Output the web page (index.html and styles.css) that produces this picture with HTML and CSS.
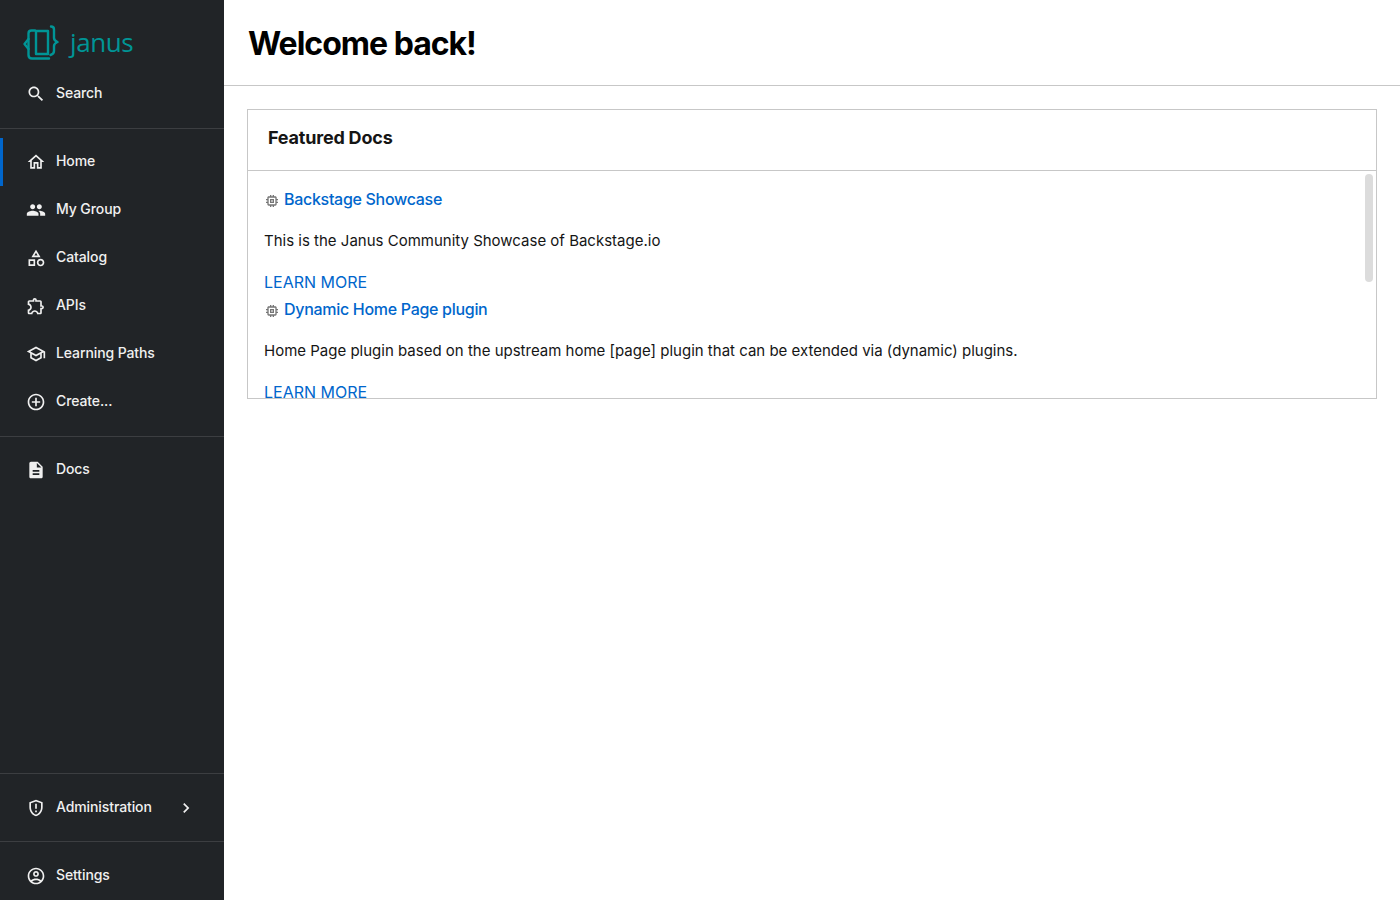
FILE: index.html
```html
<!DOCTYPE html>
<html lang="en">
<head>
<meta charset="utf-8">
<title>Welcome back!</title>
<link rel="stylesheet" href="styles.css">
</head>
<body>
<div class="app">
  <nav class="sidebar">
    <a class="logo" href="#">
      <svg class="logo-mark" width="36" height="36" viewBox="0 0 36 36" fill="none" stroke="currentColor" stroke-width="2.4" stroke-linecap="round" stroke-linejoin="round">
        <path d="M12 5.500H8.500Q5.500 5.500 5.500 8.500V30Q5.500 33.500 9 33.500H26"/>
        <path d="M13 6H25V29H13Z"/>
        <path d="M28 1.500Q31 1.500 31 4.500V13Q31 15.500 34.500 17Q31 18.500 31 21V26Q31 29 27.500 30"/>
        <path d="M5.500 14L1.500 19L5.500 24"/>
      </svg>
      <span class="logo-text">janus</span>
    </a>
    <a class="nav-item" href="#">
      <svg class="icon" viewBox="0 0 24 24"><path d="M15.5 14h-.79l-.28-.27C15.41 12.59 16 11.11 16 9.5 16 5.91 13.09 3 9.5 3S3 5.91 3 9.5 5.91 16 9.5 16c1.61 0 3.09-.59 4.23-1.57l.27.28v.79l5 4.99L20.49 19l-4.99-5zm-6 0C7.01 14 5 11.99 5 9.5S7.01 5 9.5 5 14 7.01 14 9.5 11.99 14 9.5 14z"/></svg>
      <span>Search</span>
    </a>
    <hr class="divider search-divider">
    <div class="nav-group">
      <a class="nav-item active" href="#">
        <svg class="icon" viewBox="0 0 24 24"><path d="M12 5.690l5 4.500V18h-2v-6H9v6H7v-7.810l5-4.500M12 3L2 12h3v8h6v-6h2v6h6v-8h3L12 3z"/></svg>
        <span>Home</span>
      </a>
      <a class="nav-item" href="#">
        <svg class="icon" viewBox="0 0 24 24"><path d="M16 11c1.660 0 2.990-1.340 2.990-3S17.660 5 16 5c-1.660 0-3 1.340-3 3s1.340 3 3 3zm-8 0c1.660 0 2.990-1.340 2.990-3S9.660 5 8 5C6.340 5 5 6.340 5 8s1.340 3 3 3zm0 2c-2.330 0-7 1.170-7 3.500V19h14v-2.500c0-2.330-4.670-3.500-7-3.500zm8 0c-.29 0-.62.02-.97.05 1.160.84 1.970 1.970 1.970 3.450V19h6v-2.500c0-2.330-4.670-3.500-7-3.500z"/></svg>
        <span>My Group</span>
      </a>
      <a class="nav-item" href="#">
        <svg class="icon" viewBox="0 0 24 24"><path d="M12 2l-5.500 9h11L12 2zm0 3.840L13.930 9h-3.870L12 5.840zM17.500 13c-2.490 0-4.500 2.010-4.500 4.500s2.010 4.500 4.500 4.500 4.500-2.010 4.500-4.500-2.010-4.500-4.500-4.500zm0 7c-1.380 0-2.500-1.120-2.500-2.500s1.120-2.500 2.500-2.500 2.500 1.120 2.500 2.500-1.120 2.500-2.500 2.500zM3 21.500h8v-8H3v8zm2-6h4v4H5v-4z"/></svg>
        <span>Catalog</span>
      </a>
      <a class="nav-item" href="#">
        <svg class="icon" viewBox="0 0 24 24"><path d="M10.500 4.500c.28 0 .5.22.5.5v2h6v6h2c.28 0 .5.22.5.5s-.22.5-.5.5h-2v6h-2.120c-.68-1.750-2.390-3-4.380-3s-3.700 1.250-4.380 3H4v-2.120c1.750-.68 3-2.390 3-4.380 0-1.990-1.240-3.700-2.990-4.380L4 7h6V5c0-.28.22-.5.5-.5m0-2C9.120 2.500 8 3.620 8 5H4c-1.100 0-1.990.9-1.990 2v3.800h.29c1.490 0 2.700 1.210 2.700 2.700s-1.210 2.700-2.700 2.700H2V20c0 1.100.9 2 2 2h3.800v-.3c0-1.490 1.210-2.700 2.700-2.700s2.700 1.210 2.700 2.700v.3H17c1.100 0 2-.9 2-2v-4c1.380 0 2.500-1.120 2.500-2.500S20.380 11 19 11V7c0-1.100-.9-2-2-2h-4c0-1.380-1.120-2.500-2.500-2.500z"/></svg>
        <span>APIs</span>
      </a>
      <a class="nav-item" href="#">
        <svg class="icon" viewBox="0 0 24 24"><path d="M12 3L1 9l4 2.180v6L12 21l7-3.820v-6l2-1.090V17h2V9L12 3zm6.820 6L12 12.720 5.180 9 12 5.280 18.820 9zM17 15.990l-5 2.730-5-2.730v-3.720L12 15l5-2.730v3.720z"/></svg>
        <span>Learning Paths</span>
      </a>
      <a class="nav-item" href="#">
        <svg class="icon" viewBox="0 0 24 24"><path d="M13 7h-2v4H7v2h4v4h2v-4h4v-2h-4V7zm-1-5C6.480 2 2 6.480 2 12s4.480 10 10 10 10-4.480 10-10S17.520 2 12 2zm0 18c-4.410 0-8-3.590-8-8s3.590-8 8-8 8 3.590 8 8-3.590 8-8 8z"/></svg>
        <span>Create...</span>
      </a>
    </div>
    <hr class="divider group-divider">
    <div class="nav-group">
      <a class="nav-item" href="#">
        <svg class="icon" viewBox="0 0 24 24"><path d="M14 2H6c-1.100 0-1.990.9-1.990 2L4 20c0 1.100.89 2 1.990 2H18c1.100 0 2-.9 2-2V8l-6-6zm2 16H8v-2h8v2zm0-4H8v-2h8v2zm-3-5V3.500L18.500 9H13z"/></svg>
        <span>Docs</span>
      </a>
    </div>
    <div class="spacer"></div>
    <hr class="divider bottom-divider">
    <div class="nav-group">
      <a class="nav-item" href="#">
        <svg class="icon" viewBox="0 0 24 24"><path d="M12 2L4 5v6.090c0 5.050 3.410 9.760 8 10.910 4.590-1.150 8-5.860 8-10.910V5l-8-3zm6 9.090c0 4-2.550 7.700-6 8.830-3.450-1.130-6-4.820-6-8.830v-4.700l6-2.250 6 2.250v4.700zM11 15h2v2h-2zm0-8h2v6h-2z"/></svg>
        <span class="nav-label">Administration</span>
        <svg class="icon chevron" viewBox="0 0 24 24"><path d="M10 6L8.590 7.410 13.170 12l-4.580 4.590L10 18l6-6z"/></svg>
      </a>
    </div>
    <hr class="divider bottom-divider">
    <div class="nav-group">
      <a class="nav-item" href="#">
        <svg class="icon" viewBox="0 0 24 24"><path d="M12 2C6.480 2 2 6.480 2 12s4.480 10 10 10 10-4.480 10-10S17.520 2 12 2zM7.350 18.500C8.660 17.560 10.260 17 12 17s3.340.56 4.650 1.500c-1.310.94-2.910 1.500-4.650 1.500s-3.340-.56-4.650-1.500zm10.790-1.380C16.450 15.800 14.320 15 12 15s-4.450.8-6.140 2.120C4.700 15.730 4 13.950 4 12c0-4.420 3.580-8 8-8s8 3.580 8 8c0 1.950-.7 3.730-1.860 5.120zM12 6c-1.930 0-3.500 1.570-3.500 3.500S10.070 13 12 13s3.500-1.570 3.500-3.500S13.930 6 12 6zm0 5c-.83 0-1.500-.67-1.500-1.500S11.170 8 12 8s1.500.67 1.500 1.500S12.830 11 12 11z"/></svg>
        <span>Settings</span>
      </a>
    </div>
  </nav>

  <main class="main">
    <header class="page-header">
      <h1>Welcome back!</h1>
    </header>
    <section class="content">
      <div class="card">
        <div class="card-header">Featured Docs</div>
        <div class="card-body">
          <article class="doc">
            <a class="doc-title" href="#">
              <svg class="doc-icon" viewBox="0 0 24 24"><path d="M15 9H9v6h6V9zm-2 4h-2v-2h2v2zm8-2V9h-2V7c0-1.100-.9-2-2-2h-2V3h-2v2h-2V3H9v2H7c-1.100 0-2 .9-2 2v2H3v2h2v2H3v2h2v2c0 1.100.9 2 2 2h2v2h2v-2h2v2h2v-2h2c1.100 0 2-.9 2-2v-2h2v-2h-2v-2h2zm-4 6H7V7h10v10z"/></svg>
              <span>Backstage Showcase</span>
            </a>
            <p class="doc-text">This is the Janus Community Showcase of Backstage.io</p>
            <a class="doc-more" href="#">LEARN MORE</a>
          </article>
          <article class="doc">
            <a class="doc-title" href="#">
              <svg class="doc-icon" viewBox="0 0 24 24"><path d="M15 9H9v6h6V9zm-2 4h-2v-2h2v2zm8-2V9h-2V7c0-1.100-.9-2-2-2h-2V3h-2v2h-2V3H9v2H7c-1.100 0-2 .9-2 2v2H3v2h2v2H3v2h2v2c0 1.100.9 2 2 2h2v2h2v-2h2v2h2v-2h2c1.100 0 2-.9 2-2v-2h2v-2h-2v-2h2zm-4 6H7V7h10v10z"/></svg>
              <span>Dynamic Home Page plugin</span>
            </a>
            <p class="doc-text">Home Page plugin based on the upstream home [page] plugin that can be extended via (dynamic) plugins.</p>
            <a class="doc-more" href="#">LEARN MORE</a>
          </article>
          <div class="scroll-thumb"></div>
        </div>
      </div>
    </section>
  </main>
</div>
</body>
</html>
```

FILE: styles.css
```css
* {
	box-sizing: border-box;
}
html, body {
	height: 100%;
}
body {
	margin: 0;
	font-family: Inter, "Noto Sans", sans-serif;
	font-size: 16px;
	color: #151515;
	background: #fff;
}
a {
	text-decoration: none;
}

.app {
	display: flex;
	height: 100vh;
	overflow: hidden;
}

/* sidebar */
.sidebar {
	display: flex;
	flex-direction: column;
	flex: 0 0 224px;
	background: #212427;
}
.logo {
	display: flex;
	align-items: center;
	height: 70px;
	padding: 15px 0 0 23px;
	color: #009596;
}
.logo-mark {
	flex: none;
}
.logo-text {
	margin: -2px 0 0 11px;
	font-family: "Open Sans", sans-serif;
	font-size: 26px;
	font-weight: 400;
	letter-spacing: -0.4px;
	line-height: 36px;
}
.nav-item {
	display: flex;
	align-items: center;
	height: 48px;
	padding-left: 26px;
	color: #f0f0f0;
	font-size: 14px;
	font-weight: 500;
	letter-spacing: -0.1px;
}
.nav-item span {
	margin-top: -4px;
}
.nav-item.active {
	box-shadow: inset 3px 0 0 #06c;
}
.icon {
	flex: none;
	width: 20px;
	height: 20px;
	margin-right: 10px;
	fill: currentColor;
}
.icon.chevron {
	margin: 0 28px 0 auto;
}
.divider {
	width: 100%;
	height: 1px;
	margin: 0;
	border: 0;
	background: #3c3e41;
}
.search-divider {
	margin: 10px 0 9px;
}
.group-divider {
	margin: 10px 0 9px;
}
.bottom-divider {
	margin: 9px 0 10px;
}
.spacer {
	flex: 1;
}

/* main */
.main {
	flex: 1;
	min-width: 0;
}
.page-header {
	height: 86px;
	padding: 3px 24px 0;
	border-bottom: 1px solid #c7c7c7;
	display: flex;
	align-items: center;
}
.page-header h1 {
	margin: 0;
	font-size: 32px;
	font-weight: 700;
	line-height: 1.2;
	letter-spacing: -1px;
	color: #000;
}
.content {
	padding: 23px;
}
.card {
	height: 290px;
	display: flex;
	flex-direction: column;
	border: 1px solid #c7c7c7;
}
.card-header {
	flex: none;
	height: 61px;
	padding-left: 20px;
	border-bottom: 1px solid #c7c7c7;
	font-size: 18px;
	font-weight: 700;
	letter-spacing: -0.2px;
	line-height: 56px;
}
.card-body {
	position: relative;
	flex: 1;
	min-height: 0;
	overflow: hidden;
	padding: 16px 16px 0;
}
.scroll-thumb {
	position: absolute;
	top: 3px;
	right: 3px;
	width: 8px;
	height: 108px;
	border-radius: 4px;
	background: #dcdcdc;
}
.doc {
	height: 110px;
}
.doc-title {
	display: flex;
	align-items: center;
	height: 24px;
	color: #06c;
	font-weight: 500;
	letter-spacing: -0.3px;
}
.doc-icon {
	flex: none;
	width: 16px;
	height: 16px;
	margin: 4px 4px 0 0;
	fill: #757575;
}
.doc-text {
	margin: 0;
	padding-top: 18px;
	font-size: 15px;
	line-height: 24px;
}
.doc-more {
	display: block;
	margin-top: 17px;
	line-height: 24px;
	color: #06c;
}
```
